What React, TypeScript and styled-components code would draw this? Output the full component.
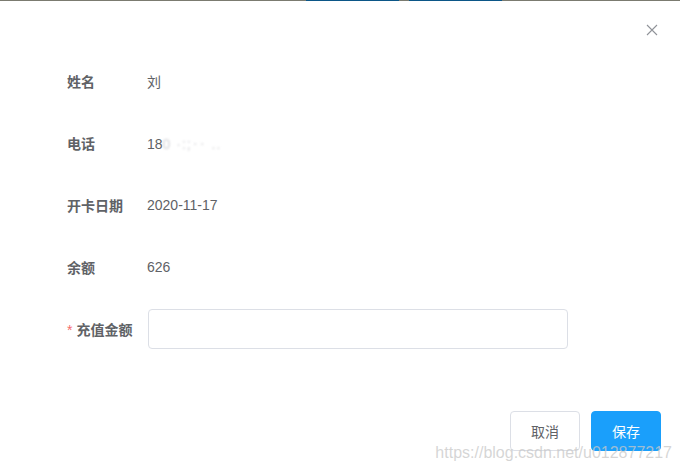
import React from 'react';
import styled, { createGlobalStyle } from 'styled-components';

const Global = createGlobalStyle`
  html, body { margin: 0; padding: 0; background: #fff; }
  body {
    font-family: "Liberation Sans", "Noto Sans CJK SC", sans-serif;
    font-size: 14px;
    color: #606266;
  }
`;

const Page = styled.div`
  position: relative;
  width: 680px;
  height: 471px;
  overflow: hidden;
  background: #fff;
`;

const TopStrip = styled.div`
  display: flex;
  height: 1px;
  background: #7b7b70;
`;

const StripPart = styled.div<{ $w: number; $c: string }>`
  width: ${p => p.$w}px;
  background: ${p => p.$c};
`;

const Header = styled.div`
  display: flex;
  justify-content: flex-end;
  height: 60px;
  padding: 0 21px 2px 0;
  box-sizing: border-box;
  align-items: center;
`;

const Close = styled.button`
  border: none;
  background: none;
  padding: 0;
  width: 14px;
  height: 14px;
  display: flex;
  cursor: pointer;
`;

const Form = styled.div`
  display: flex;
  flex-direction: column;
  gap: 22px;
  padding: 0 112px 0 67px;
`;

const Row = styled.div`
  display: flex;
  align-items: center;
  height: 40px;
`;

const Label = styled.div`
  width: 80px;
  flex-shrink: 0;
  font-weight: bold;
  color: #606266;
  font-size: 14px;
`;

const Star = styled.span`
  color: #f56c6c;
  font-weight: normal;
  margin-right: 4px;
`;

const Value = styled.div`
  color: #606266;
  font-size: 14px;
`;

const Hidden = styled.span`
  color: #d4d4d8;
  filter: blur(1.2px);
  letter-spacing: 1px;
`;

const Input = styled.input`
  flex: 1;
  height: 40px;
  box-sizing: border-box;
  border: 1px solid #dcdfe6;
  border-radius: 4px;
  margin-left: 1px;
  outline: none;
  padding: 0 15px;
  font-size: 14px;
`;

const Footer = styled.div`
  display: flex;
  justify-content: flex-end;
  gap: 11px;
  padding: 62px 19px 0 0;
`;

const Btn = styled.button<{ $primary?: boolean }>`
  width: 70px;
  height: 40px;
  border-radius: 4px;
  font-family: "Liberation Sans", "Noto Sans CJK SC", sans-serif;
  font-size: 14px;
  cursor: pointer;
  border: 1px solid ${p => (p.$primary ? '#1a9ffb' : '#dcdfe6')};
  background: ${p => (p.$primary ? '#1a9ffb' : '#fff')};
  color: ${p => (p.$primary ? '#fff' : '#606266')};
`;

const Watermark = styled.div`
  position: absolute;
  right: 8px;
  bottom: 9px;
  font-size: 16px;
  color: rgba(200, 200, 200, 0.75);
  font-family: "Liberation Sans", sans-serif;
  pointer-events: none;
`;

export default function App() {
  return (
    <>
      <Global />
      <Page>
        <TopStrip>
          <StripPart $w={306} $c="#7b7b70" />
          <StripPart $w={93} $c="#0b5687" />
          <StripPart $w={10} $c="#7b7b70" />
          <StripPart $w={93} $c="#0b5687" />
        </TopStrip>
        <Header>
          <Close aria-label="close">
            <svg width="14" height="14" viewBox="0 0 14 14">
              <path d="M2 2L12 12M12 2L2 12" stroke="#909399" strokeWidth="1.1" />
            </svg>
          </Close>
        </Header>
        <Form>
          <Row>
            <Label>姓名</Label>
            <Value>刘</Value>
          </Row>
          <Row>
            <Label>电话</Label>
            <Value>18<Hidden>0 ·:;‥  ..</Hidden></Value>
          </Row>
          <Row>
            <Label>开卡日期</Label>
            <Value>2020-11-17</Value>
          </Row>
          <Row>
            <Label>余额</Label>
            <Value>626</Value>
          </Row>
          <Row>
            <Label><Star>*</Star>充值金额</Label>
            <Input />
          </Row>
        </Form>
        <Footer>
          <Btn>取消</Btn>
          <Btn $primary>保存</Btn>
        </Footer>
        <Watermark>https://blog.csdn.net/u012877217</Watermark>
      </Page>
    </>
  );
}
